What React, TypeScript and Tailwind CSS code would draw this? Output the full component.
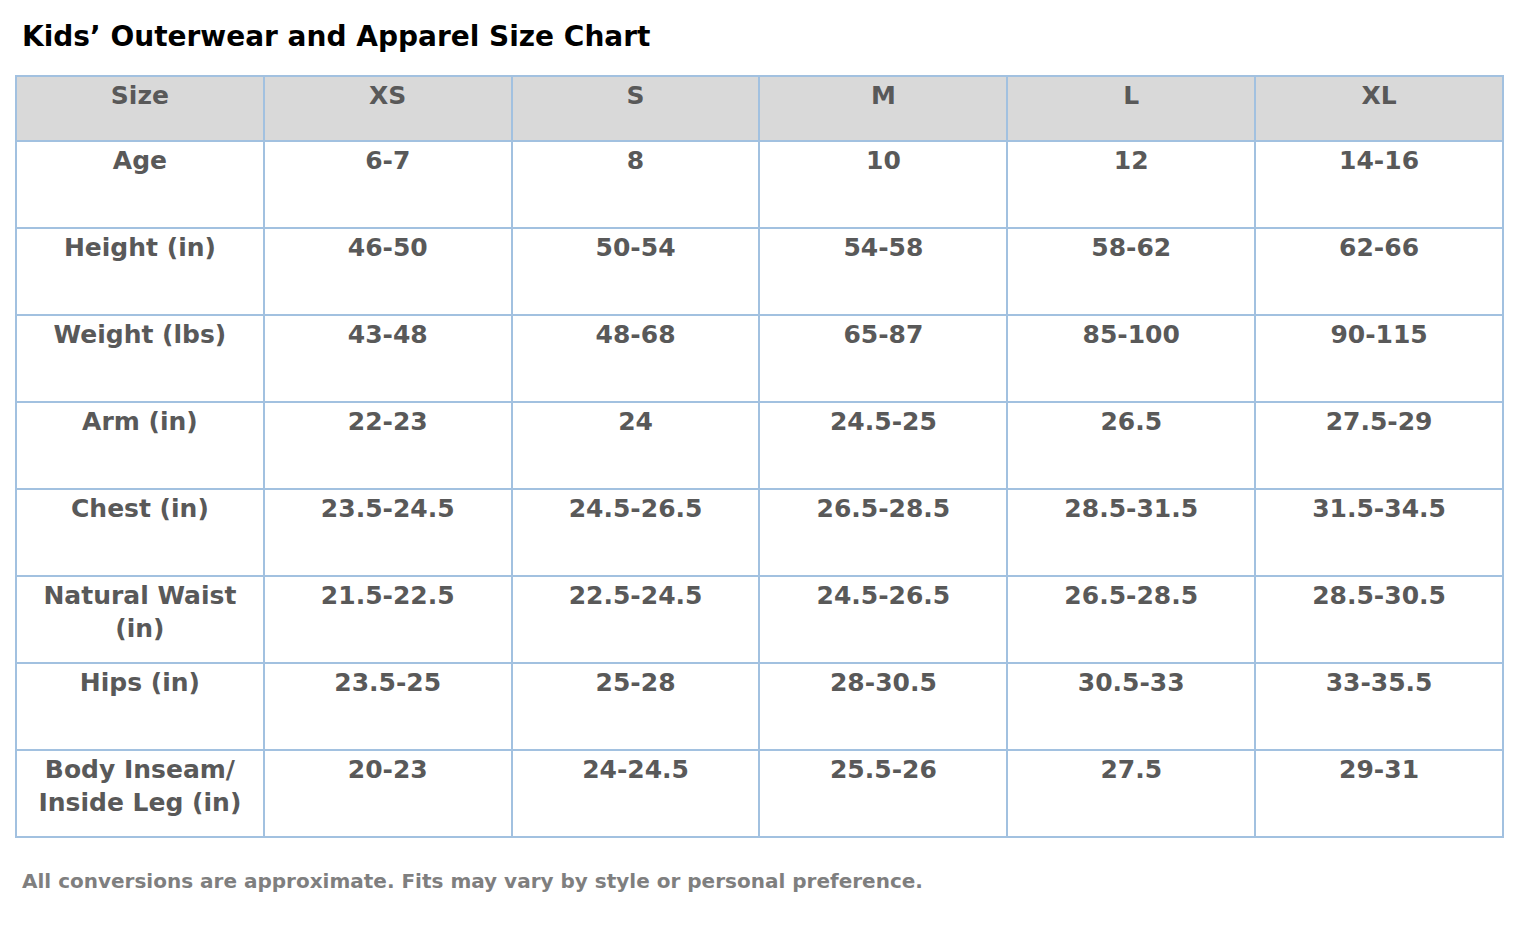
const sizes = ["XS", "S", "M", "L", "XL"];

const rows: { label: string[]; values: string[] }[] = [
  { label: ["Age"], values: ["6-7", "8", "10", "12", "14-16"] },
  { label: ["Height (in)"], values: ["46-50", "50-54", "54-58", "58-62", "62-66"] },
  { label: ["Weight (lbs)"], values: ["43-48", "48-68", "65-87", "85-100", "90-115"] },
  { label: ["Arm (in)"], values: ["22-23", "24", "24.5-25", "26.5", "27.5-29"] },
  { label: ["Chest (in)"], values: ["23.5-24.5", "24.5-26.5", "26.5-28.5", "28.5-31.5", "31.5-34.5"] },
  { label: ["Natural Waist", "(in)"], values: ["21.5-22.5", "22.5-24.5", "24.5-26.5", "26.5-28.5", "28.5-30.5"] },
  { label: ["Hips (in)"], values: ["23.5-25", "25-28", "28-30.5", "30.5-33", "33-35.5"] },
  { label: ["Body Inseam/", "Inside Leg (in)"], values: ["20-23", "24-24.5", "25.5-26", "27.5", "29-31"] },
];

export default function App() {
  return (
    <div className="min-h-[937px] w-[1515px] bg-white font-['DejaVu_Sans',Verdana,sans-serif] font-bold">
      <div className="px-[15px] pt-[19px]">
        <h1 className="pl-[7px] text-[28px] leading-[36px] text-black">Kids’ Outerwear and Apparel Size Chart</h1>
        <table className="mt-[20px] w-[1489px] table-fixed border-collapse text-[25px] leading-[33px] text-[#595959]">
          <thead>
            <tr className="h-[65px] bg-[#d9d9d9]">
              <th className="border-2 border-[#a2c1e0] px-1 pt-[2px] align-top font-bold">Size</th>
              {sizes.map((s) => (
                <th key={s} className="border-2 border-[#a2c1e0] px-1 pt-[2px] align-top font-bold">
                  {s}
                </th>
              ))}
            </tr>
          </thead>
          <tbody>
            {rows.map((r) => (
              <tr key={r.label.join(" ")} className="h-[87px]">
                <td className="border-2 border-[#a2c1e0] px-1 pt-[2px] text-center align-top">
                  {r.label.map((l) => (
                    <div key={l}>{l}</div>
                  ))}
                </td>
                {r.values.map((v, i) => (
                  <td key={i} className="border-2 border-[#a2c1e0] px-1 pt-[2px] text-center align-top">
                    {v}
                  </td>
                ))}
              </tr>
            ))}
          </tbody>
        </table>
        <p className="mt-[30px] pl-[7px] text-[20px] leading-[26px] text-[#7f7f7f]">
          All conversions are approximate. Fits may vary by style or personal preference.
        </p>
      </div>
    </div>
  );
}
